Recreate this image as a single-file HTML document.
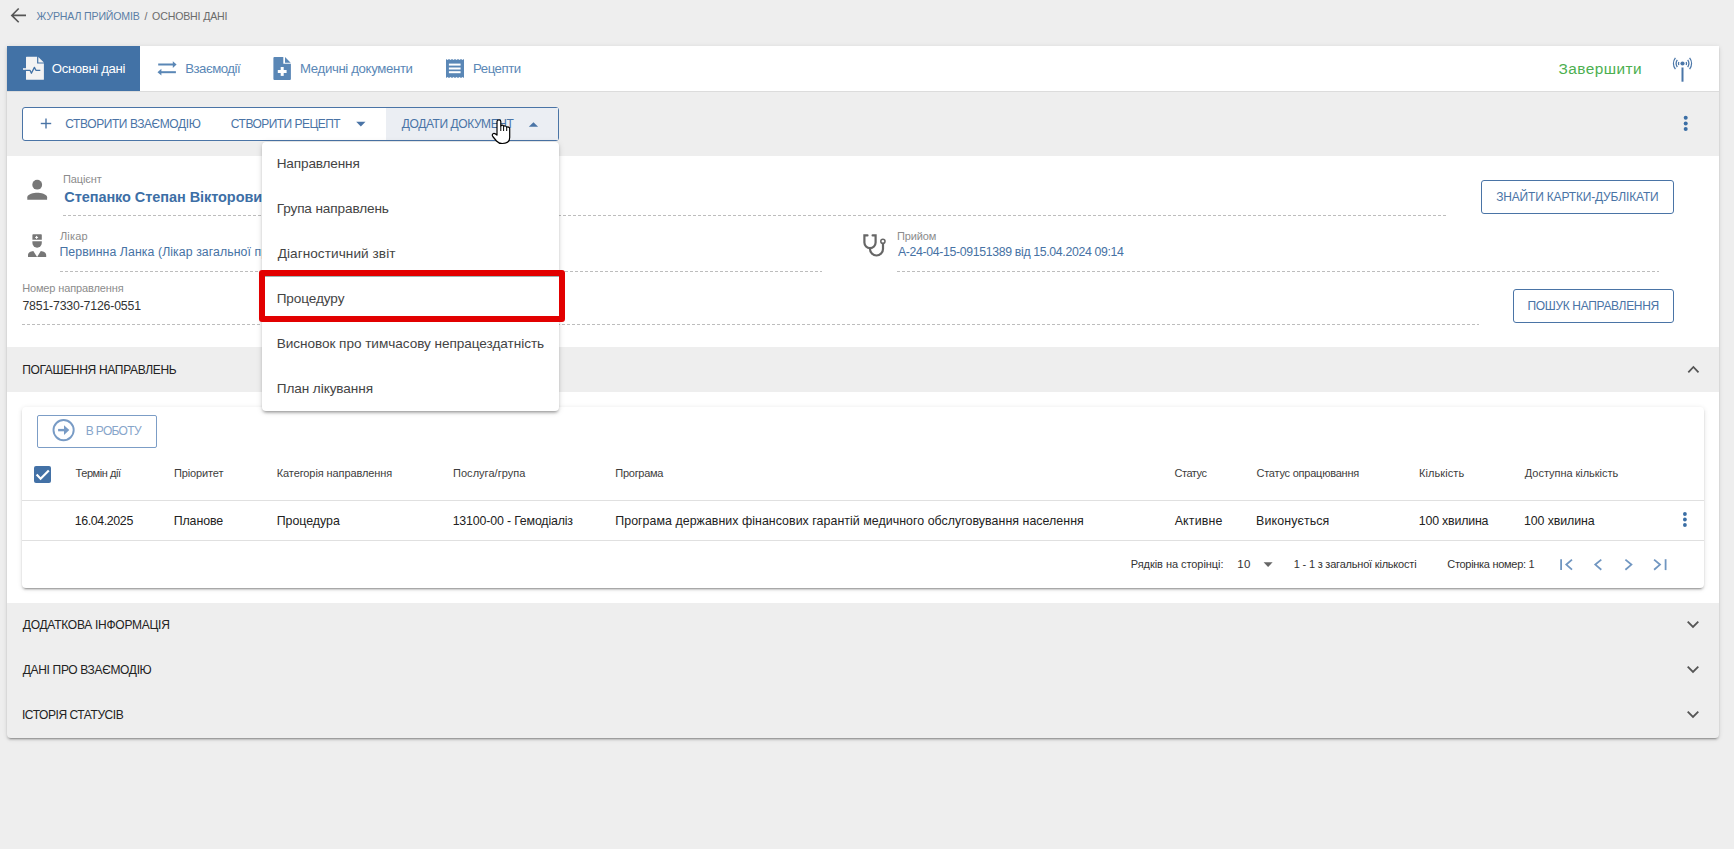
<!DOCTYPE html>
<html><head><meta charset="utf-8"><style>
html,body{margin:0;padding:0;}
body{width:1734px;height:849px;background:#eeeeee;position:relative;overflow:hidden;font-family:"Liberation Sans", sans-serif;}
.t{position:absolute;white-space:nowrap;}
</style></head><body>
<svg style="position:absolute;left:9px;top:7px" width="20" height="17" viewBox="0 0 20 17"><path d="M9.7 1.5 L2.8 8.4 L9.7 15.2 M3 8.4 H17" fill="none" stroke="#555" stroke-width="1.6"/></svg>
<div class="t" style="left:36.56px;top:9px;font-size:10.6px;line-height:15px;letter-spacing:-0.165px;color:#5b7ea6;">ЖУРНАЛ ПРИЙОМІВ</div>
<div class="t" style="left:144.48px;top:9px;font-size:10.6px;line-height:15px;letter-spacing:-1.017px;color:#6b6b6b;">/</div>
<div class="t" style="left:152.12px;top:9px;font-size:10.6px;line-height:15px;letter-spacing:-0.168px;color:#6b6b6b;">ОСНОВНІ ДАНІ</div>
<div style="position:absolute;left:7px;top:46px;width:1712px;height:692px;background:#eeeeee;border-radius:0 0 4px 4px;box-shadow:0 3px 1px -2px rgba(0,0,0,.2),0 2px 2px 0 rgba(0,0,0,.14),0 1px 5px 0 rgba(0,0,0,.12);"></div>
<div style="position:absolute;left:7px;top:46px;width:1712px;height:45px;background:#fff;"></div>
<div style="position:absolute;left:7px;top:91px;width:1712px;height:1px;background:#dcdcdc;"></div>
<div style="position:absolute;left:7px;top:46px;width:133px;height:45px;background:#4272a6;"></div>
<div style="position:absolute;left:7px;top:156px;width:1712px;height:191px;background:#fff;"></div>
<div style="position:absolute;left:7px;top:392px;width:1712px;height:211px;background:#fff;"></div>
<div style="position:absolute;left:22px;top:407px;width:1682px;height:181px;background:#fff;border-radius:4px;box-shadow:0 3px 1px -2px rgba(0,0,0,.2),0 2px 2px 0 rgba(0,0,0,.14),0 1px 5px 0 rgba(0,0,0,.12);"></div>
<div class="t" style="left:51.80px;top:60px;font-size:13.2px;line-height:18px;letter-spacing:-0.366px;color:#ffffff;">Основні дані</div>
<div class="t" style="left:185.27px;top:60px;font-size:13.2px;line-height:18px;letter-spacing:-0.498px;color:#5a87b6;">Взаємодії</div>
<div class="t" style="left:300.05px;top:60px;font-size:13.2px;line-height:18px;letter-spacing:-0.348px;color:#5a87b6;">Медичні документи</div>
<div class="t" style="left:473.05px;top:60px;font-size:13.2px;line-height:18px;letter-spacing:-0.465px;color:#5a87b6;">Рецепти</div>
<div class="t" style="left:1558.52px;top:58px;font-size:15.4px;line-height:22px;letter-spacing:0.446px;color:#4caf50;">Завершити</div>
<div style="position:absolute;left:22px;top:107px;width:535px;height:32px;background:#fff;border:1px solid #4a74a6;border-radius:3px;box-sizing:content-box;"></div>
<div style="position:absolute;left:386px;top:108px;width:172px;height:32px;background:#ebeef3;"></div>
<div class="t" style="left:65.25px;top:116px;font-size:12px;line-height:17px;letter-spacing:-0.415px;color:#4a74a6;">СТВОРИТИ ВЗАЄМОДІЮ</div>
<div class="t" style="left:230.86px;top:116px;font-size:12px;line-height:17px;letter-spacing:-0.534px;color:#4a74a6;">СТВОРИТИ РЕЦЕПТ</div>
<div class="t" style="left:401.83px;top:116px;font-size:12px;line-height:17px;letter-spacing:-0.419px;color:#4a74a6;">ДОДАТИ ДОКУМЕНТ</div>
<div class="t" style="left:63.02px;top:172px;font-size:11px;line-height:15px;letter-spacing:-0.111px;color:#8c8c8c;">Пацієнт</div>
<div class="t" style="left:64.28px;top:187px;font-size:14.5px;line-height:20px;letter-spacing:-0.065px;color:#3d6fa6;font-weight:bold;">Степанко Степан Вікторови<span style="color:#3d6fa6">ч</span></div>
<div style="position:absolute;left:63px;top:215px;width:1384px;height:1px;background:repeating-linear-gradient(90deg,#bdbdbd 0 3px,transparent 3px 5px)"></div>
<div class="t" style="left:59.97px;top:229px;font-size:11px;line-height:15px;letter-spacing:0.173px;color:#8c8c8c;">Лікар</div>
<div class="t" style="left:59.40px;top:244px;font-size:12.3px;line-height:17px;letter-spacing:0.080px;color:#4672a4;">Первинна Ланка (Лікар загальної п<span style="color:#4672a4">рактики-сімейний лікар)</span></div>
<div style="position:absolute;left:60px;top:271px;width:762px;height:1px;background:repeating-linear-gradient(90deg,#bdbdbd 0 3px,transparent 3px 5px)"></div>
<div class="t" style="left:897.02px;top:229px;font-size:11px;line-height:15px;letter-spacing:-0.153px;color:#8c8c8c;">Прийом</div>
<div class="t" style="left:897.94px;top:244px;font-size:12.3px;line-height:17px;letter-spacing:-0.343px;color:#4672a4;">A-24-04-15-09151389 від 15.04.2024 09:14</div>
<div style="position:absolute;left:897px;top:271px;width:762px;height:1px;background:repeating-linear-gradient(90deg,#bdbdbd 0 3px,transparent 3px 5px)"></div>
<div class="t" style="left:22.14px;top:281px;font-size:11px;line-height:15px;letter-spacing:-0.125px;color:#8c8c8c;">Номер направлення</div>
<div class="t" style="left:22.43px;top:298px;font-size:12.3px;line-height:17px;letter-spacing:-0.172px;color:#333333;">7851-7330-7126-0551</div>
<div style="position:absolute;left:22px;top:324px;width:1457px;height:1px;background:repeating-linear-gradient(90deg,#bdbdbd 0 3px,transparent 3px 5px)"></div>
<div style="position:absolute;left:1481px;top:180px;width:191px;height:32px;border:1px solid #4a74a6;border-radius:3px;"></div>
<div class="t" style="left:1496.14px;top:189px;font-size:12px;line-height:17px;letter-spacing:-0.167px;color:#4a74a6;">ЗНАЙТИ КАРТКИ-ДУБЛІКАТИ</div>
<div style="position:absolute;left:1513px;top:289px;width:159px;height:32px;border:1px solid #4a74a6;border-radius:3px;"></div>
<div class="t" style="left:1527.43px;top:298px;font-size:12px;line-height:17px;letter-spacing:-0.328px;color:#4a74a6;">ПОШУК НАПРАВЛЕННЯ</div>
<div class="t" style="left:22.14px;top:362px;font-size:12px;line-height:17px;letter-spacing:-0.319px;color:#222222;">ПОГАШЕННЯ НАПРАВЛЕНЬ</div>
<div style="position:absolute;left:37px;top:415px;width:118px;height:31px;border:1px solid #7c9dc6;border-radius:2px;"></div>
<div class="t" style="left:85.87px;top:423px;font-size:12px;line-height:17px;letter-spacing:-0.683px;color:#87a5ca;">В РОБОТУ</div>
<div class="t" style="left:75.56px;top:466px;font-size:11px;line-height:15px;letter-spacing:-0.443px;color:#3d3d3d;">Термін дії</div>
<div class="t" style="left:173.89px;top:466px;font-size:11px;line-height:15px;letter-spacing:-0.117px;color:#3d3d3d;">Пріоритет</div>
<div class="t" style="left:276.73px;top:466px;font-size:11px;line-height:15px;letter-spacing:-0.094px;color:#3d3d3d;">Категорія направлення</div>
<div class="t" style="left:453.04px;top:466px;font-size:11px;line-height:15px;letter-spacing:0.027px;color:#3d3d3d;">Послуга/група</div>
<div class="t" style="left:615.37px;top:466px;font-size:11px;line-height:15px;letter-spacing:-0.286px;color:#3d3d3d;">Програма</div>
<div class="t" style="left:1174.40px;top:466px;font-size:11px;line-height:15px;letter-spacing:-0.419px;color:#3d3d3d;">Статус</div>
<div class="t" style="left:1256.47px;top:466px;font-size:11px;line-height:15px;letter-spacing:-0.229px;color:#3d3d3d;">Статус опрацювання</div>
<div class="t" style="left:1419.02px;top:466px;font-size:11px;line-height:15px;letter-spacing:0.072px;color:#3d3d3d;">Кількість</div>
<div class="t" style="left:1524.81px;top:466px;font-size:11px;line-height:15px;letter-spacing:-0.037px;color:#3d3d3d;">Доступна кількість</div>
<div style="position:absolute;left:22px;top:500px;width:1682px;height:1px;background:#e0e0e0;"></div>
<div class="t" style="left:74.66px;top:513px;font-size:12.4px;line-height:17px;letter-spacing:-0.377px;color:#222222;">16.04.2025</div>
<div class="t" style="left:173.67px;top:513px;font-size:12.4px;line-height:17px;letter-spacing:-0.085px;color:#222222;">Планове</div>
<div class="t" style="left:276.70px;top:513px;font-size:12.4px;line-height:17px;letter-spacing:-0.029px;color:#222222;">Процедура</div>
<div class="t" style="left:452.66px;top:513px;font-size:12.4px;line-height:17px;letter-spacing:-0.173px;color:#222222;">13100-00 - Гемодіаліз</div>
<div class="t" style="left:615.27px;top:513px;font-size:12.4px;line-height:17px;letter-spacing:0.038px;color:#222222;">Програма державних фінансових гарантій медичного обслуговування населення</div>
<div class="t" style="left:1174.68px;top:513px;font-size:12.4px;line-height:17px;letter-spacing:0.179px;color:#222222;">Активне</div>
<div class="t" style="left:1256.05px;top:513px;font-size:12.4px;line-height:17px;letter-spacing:0.122px;color:#222222;">Виконується</div>
<div class="t" style="left:1418.80px;top:513px;font-size:12.4px;line-height:17px;letter-spacing:-0.199px;color:#222222;">100 хвилина</div>
<div class="t" style="left:1524.01px;top:513px;font-size:12.4px;line-height:17px;letter-spacing:-0.102px;color:#222222;">100 хвилина</div>
<div style="position:absolute;left:22px;top:540px;width:1682px;height:1px;background:#e0e0e0;"></div>
<div class="t" style="left:1130.77px;top:557px;font-size:11px;line-height:15px;letter-spacing:-0.056px;color:#333333;">Рядків на сторінці:</div>
<div class="t" style="left:1237.29px;top:556px;font-size:11.5px;line-height:16px;letter-spacing:0.379px;color:#333333;">10</div>
<div class="t" style="left:1293.84px;top:557px;font-size:11px;line-height:15px;letter-spacing:-0.206px;color:#333333;">1 - 1 з загальної кількості</div>
<div class="t" style="left:1447.27px;top:557px;font-size:11px;line-height:15px;letter-spacing:-0.296px;color:#333333;">Сторінка номер: 1</div>
<div class="t" style="left:22.83px;top:617px;font-size:12px;line-height:17px;letter-spacing:-0.266px;color:#222222;">ДОДАТКОВА ІНФОРМАЦІЯ</div>
<div class="t" style="left:22.83px;top:662px;font-size:12px;line-height:17px;letter-spacing:-0.336px;color:#222222;">ДАНІ ПРО ВЗАЄМОДІЮ</div>
<div class="t" style="left:21.94px;top:707px;font-size:12px;line-height:17px;letter-spacing:-0.433px;color:#222222;">ІСТОРІЯ СТАТУСІВ</div>
<div style="position:absolute;left:262px;top:142px;width:297px;height:269px;background:#fff;border-radius:4px;box-shadow:0 3px 3px -2px rgba(0,0,0,.25),0 2px 3px rgba(0,0,0,.14),0 1px 6px rgba(0,0,0,.12);"></div>
<div class="t" style="left:276.70px;top:154px;font-size:13.6px;line-height:19px;letter-spacing:-0.148px;color:#444444;">Направлення</div>
<div class="t" style="left:276.70px;top:199px;font-size:13.6px;line-height:19px;letter-spacing:-0.120px;color:#444444;">Група направлень</div>
<div class="t" style="left:277.67px;top:244px;font-size:13.6px;line-height:19px;letter-spacing:0.066px;color:#444444;">Діагностичний звіт</div>
<div class="t" style="left:276.71px;top:289px;font-size:13.6px;line-height:19px;letter-spacing:-0.103px;color:#444444;">Процедуру</div>
<div class="t" style="left:276.70px;top:334px;font-size:13.6px;line-height:19px;letter-spacing:-0.050px;color:#444444;">Висновок про тимчасову непрацездатність</div>
<div class="t" style="left:276.71px;top:379px;font-size:13.6px;line-height:19px;letter-spacing:-0.081px;color:#444444;">План лікування</div>
<div style="position:absolute;left:259px;top:270px;width:294px;height:40px;border:6px solid #e20000;border-radius:3px;box-shadow:inset 0 1px 0 rgba(40,90,90,.45);"></div>
<svg style="position:absolute;left:0;top:0;overflow:visible" width="1734" height="849" viewBox="0 0 1734 849">
<!-- active tab file-pulse -->
<path d="M26.6 56.7 H37.1 V63.5 H43.9 V79.2 Q43.9 79.8 43.3 79.8 H26.6 Q26 79.8 26 79.2 V57.3 Q26 56.7 26.6 56.7 Z" fill="#f3f3f3"/>
<path d="M38.3 57 L43.9 62.6 H38.3 Z" fill="#f3f3f3"/>
<rect x="23" y="68.2" width="3.5" height="1.6" fill="#f3f3f3"/>
<polyline points="25.5,70.3 30,70.3 31.4,73.2 34.4,67.4 35.9,70.3 40.3,70.3" fill="none" stroke="#4272a6" stroke-width="1.3" stroke-linejoin="round"/>
<!-- swap arrows -->
<g fill="#5a87b6">
<rect x="158.2" y="63.5" width="15.5" height="2"/>
<path d="M172.8 61.2 L176.6 64.5 L172.8 67.9 Z"/>
<rect x="160.5" y="71.2" width="15.4" height="2"/>
<path d="M161.4 68.8 L157.5 72.2 L161.4 75.6 Z"/>
</g>
<!-- med doc -->
<path d="M274.4 56.9 H283.3 V63.7 H290.9 V79 Q290.9 80 289.9 80 H274.4 Q273.4 80 273.4 79 V57.9 Q273.4 56.9 274.4 56.9 Z" fill="#5a87b6"/>
<path d="M285 57 L290.7 62.7 H285 Z" fill="#5a87b6"/>
<rect x="277.8" y="70" width="8.8" height="3" fill="#fff"/>
<rect x="280.7" y="67" width="3" height="8.9" fill="#fff"/>
<!-- receipt -->
<path d="M446 59 L447.5 60 L449 59 L450.5 60 L452 59 L453.5 60 L455 59 L456.5 60 L458 59 L459.5 60 L461 59 L462.5 60 L464 59 V78 L462.5 77 L461 78 L459.5 77 L458 78 L456.5 77 L455 78 L453.5 77 L452 78 L450.5 77 L449 78 L447.5 77 L446 78 Z" fill="#5a87b6"/>
<g fill="#fff"><rect x="448.9" y="63.6" width="11.7" height="2"/><rect x="448.9" y="67.5" width="11.7" height="2"/><rect x="448.9" y="71.2" width="11.7" height="2"/></g>
<!-- antenna -->
<g fill="none" stroke="#4a76a8" stroke-width="1.3">
<path d="M1678.79 62.00 A4.0 4.0 0 0 0 1678.79 65.00"/>
<path d="M1686.21 62.00 A4.0 4.0 0 0 1 1686.21 65.00"/>
<path d="M1677.28 59.98 A6.3 6.3 0 0 0 1677.28 67.02"/>
<path d="M1687.72 59.98 A6.3 6.3 0 0 1 1687.72 67.02"/>
<path d="M1675.41 57.96 A9.0 9.0 0 0 0 1675.41 69.04"/>
<path d="M1689.59 57.96 A9.0 9.0 0 0 1 1689.59 69.04"/>
</g>
<circle cx="1682.5" cy="63.5" r="2.1" fill="#4a76a8"/>
<rect x="1681.5" y="67.5" width="2.0" height="14.2" fill="#4a76a8"/>
<!-- toolbar kebab -->
<g fill="#3a6ea5"><circle cx="1685.7" cy="117.8" r="2"/><circle cx="1685.7" cy="123.4" r="2"/><circle cx="1685.7" cy="129.1" r="2"/></g>
<!-- toolbar plus & triangles -->
<g fill="#4a74a6">
<rect x="40.8" y="122.8" width="10.4" height="1.4"/><rect x="45.3" y="118.5" width="1.4" height="10"/>
<path d="M356.2 121.8 H365.5 L360.85 126.4 Z"/>
<path d="M528.8 126.8 H538.1 L533.45 122.2 Z"/>
</g>
<!-- person -->
<g fill="#777">
<circle cx="37.2" cy="184.7" r="4.9"/>
<path d="M27.3 199.7 V197.2 C27.3 193.9 33.9 192.7 37.2 192.7 C40.5 192.7 47.1 193.9 47.1 197.2 V199.7 Z"/>
<!-- doctor -->
<path d="M33.2 234.3 H41 Q41.8 234.3 41.8 235.1 V239.8 H32.4 V235.1 Q32.4 234.3 33.2 234.3 Z"/>
<path d="M32.4 241.3 H41.8 V243 A4.7 4.7 0 0 1 32.4 243 Z"/>
<path d="M28 257 V255.2 C28 252.5 30.5 251.3 33.3 251 L37.1 257 L40.8 251 C43.6 251.3 46.2 252.5 46.2 255.2 V257 Z"/>
</g>
<g fill="#fff"><rect x="35.1" y="236.9" width="3" height="1"/><rect x="36.1" y="235.9" width="1" height="3"/></g>
<!-- stethoscope -->
<g fill="none" stroke="#666" stroke-width="2.2" stroke-linecap="round">
<path d="M867.5 235.4 H864.4 V242.5 A5.6 5.6 0 0 0 875.6 242.5 V235.4 H872.6"/>
<path d="M870 248 V249 A6.5 6.5 0 0 0 883 249 V243.6"/>
<circle cx="882.9" cy="241.3" r="2.1" stroke-width="1.5"/>
</g>
<!-- accordion chevrons -->
<g fill="none" stroke="#555" stroke-width="1.8">
<path d="M1688.3 372.3 L1693.4 367 L1698.5 372.3"/>
<path d="M1687.7 621.6 L1693 627 L1698.3 621.6"/>
<path d="M1687.7 666.6 L1693 672 L1698.3 666.6"/>
<path d="M1687.7 711.6 L1693 717 L1698.3 711.6"/>
</g>
<!-- v roboty icon -->
<circle cx="63.6" cy="430.1" r="10.1" fill="none" stroke="#789bc5" stroke-width="1.9"/>
<rect x="58.1" y="428.9" width="6.5" height="2.4" fill="#789bc5"/>
<path d="M64 425.3 L69.3 430.1 L64 435 Z" fill="#789bc5"/>
<!-- checkbox -->
<rect x="34" y="466" width="17" height="17" rx="2" fill="#4371a6"/>
<path d="M36.6 474.6 L40.6 478.7 L48.8 470.4" fill="none" stroke="#fff" stroke-width="2.2"/>
<!-- row kebab -->
<g fill="#3a6ea5"><circle cx="1684.9" cy="514" r="1.9"/><circle cx="1684.9" cy="519.5" r="1.9"/><circle cx="1684.9" cy="525" r="1.9"/></g>
<!-- pagination -->
<path d="M1263.6 562.3 H1272.6 L1268.1 567.1 Z" fill="#666"/>
<g fill="none" stroke="#7096c1" stroke-width="1.8">
<path d="M1561.1 559.2 V570.1"/>
<path d="M1572 559.6 L1566.3 564.6 L1572 569.7"/>
<path d="M1601.3 559.6 L1595.3 564.6 L1601.3 569.7"/>
<path d="M1625.4 559.6 L1631.4 564.6 L1625.4 569.7"/>
<path d="M1654.1 559.6 L1660 564.6 L1654.1 569.7"/>
<path d="M1665.6 559.2 V570.1"/>
</g>
</svg>
<!-- cursor -->
<svg style="position:absolute;left:480px;top:110px" width="40" height="40" viewBox="0 0 40 40">
<path d="M17 24 L17 11.6 C17 9.4 20.8 9.4 20.8 11.6 L20.8 16 C21.5 14.6 23.3 14.8 23.6 16.4 C24.4 15.6 26.4 15.8 26.7 17.4 C27.4 16.7 29.7 16.8 29.7 18.6 L29.7 27.5 C29.7 31 27 33.5 22.2 33.5 C19.5 33.5 17.8 32.5 16.5 31 L12.8 26.5 C11.8 25.2 12.5 23.3 14 23.3 C15 23.3 16 24 17 25 Z" fill="#fff" stroke="#000" stroke-width="1.2" stroke-linejoin="round"/>
<path d="M20.8 16 V21 M23.6 16.4 V21 M26.7 17.4 V21" fill="none" stroke="#000" stroke-width="1"/>
</svg>

</body></html>
